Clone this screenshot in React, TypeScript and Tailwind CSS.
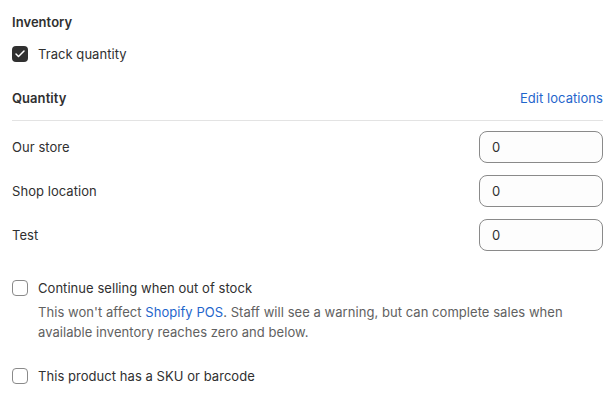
import { Check } from "lucide-react";

const locations = ["Our store", "Shop location", "Test"];

const Checkbox = ({ checked }: { checked?: boolean }) =>
  checked ? (
    <span className="flex h-4 w-4 shrink-0 items-center justify-center rounded-[4px] bg-[#303030]">
      <Check className="h-3 w-3 text-white" strokeWidth={3} />
    </span>
  ) : (
    <span className="h-4 w-4 shrink-0 rounded-[4px] border border-[#8a8a8a] bg-white" />
  );

export default function App() {
  return (
    <div
      className="h-[401px] w-[613px] bg-white pl-3 pr-[10px] pt-3 text-[13px] leading-5 tracking-[0.05px] text-[#303030]"
      style={{ fontFamily: "Inter, 'Noto Sans', sans-serif" }}
    >
      <h2 className="font-semibold">Inventory</h2>
      <label className="mt-3 flex items-center gap-2.5">
        <Checkbox checked />
        <span>Track quantity</span>
      </label>

      <div className="mt-6 flex items-center justify-between">
        <h3 className="font-semibold">Quantity</h3>
        <a className="text-[#1f66cc]" href="#">
          Edit locations
        </a>
      </div>
      <div className="mt-3 border-t border-[#e3e3e3]" />

      <div className="mt-[10px] flex flex-col gap-3">
        {locations.map((loc) => (
          <div key={loc} className="flex items-center justify-between">
            <span>{loc}</span>
            <div className="flex h-8 w-[124px] items-center rounded-lg border border-[#8a8a8a] bg-[#fdfdfd] px-3">
              0
            </div>
          </div>
        ))}
      </div>

      <label className="mt-[27px] flex items-center gap-2.5">
        <Checkbox />
        <span>Continue selling when out of stock</span>
      </label>
      <p className="mt-1 pl-[26px] text-[#616161]">
        This won't affect <a className="text-[#1f66cc]" href="#">Shopify POS</a>.
        Staff will see a warning, but can complete sales when available inventory
        reaches zero and below.
      </p>

      <label className="mt-6 flex items-center gap-2.5">
        <Checkbox />
        <span>This product has a SKU or barcode</span>
      </label>
    </div>
  );
}
